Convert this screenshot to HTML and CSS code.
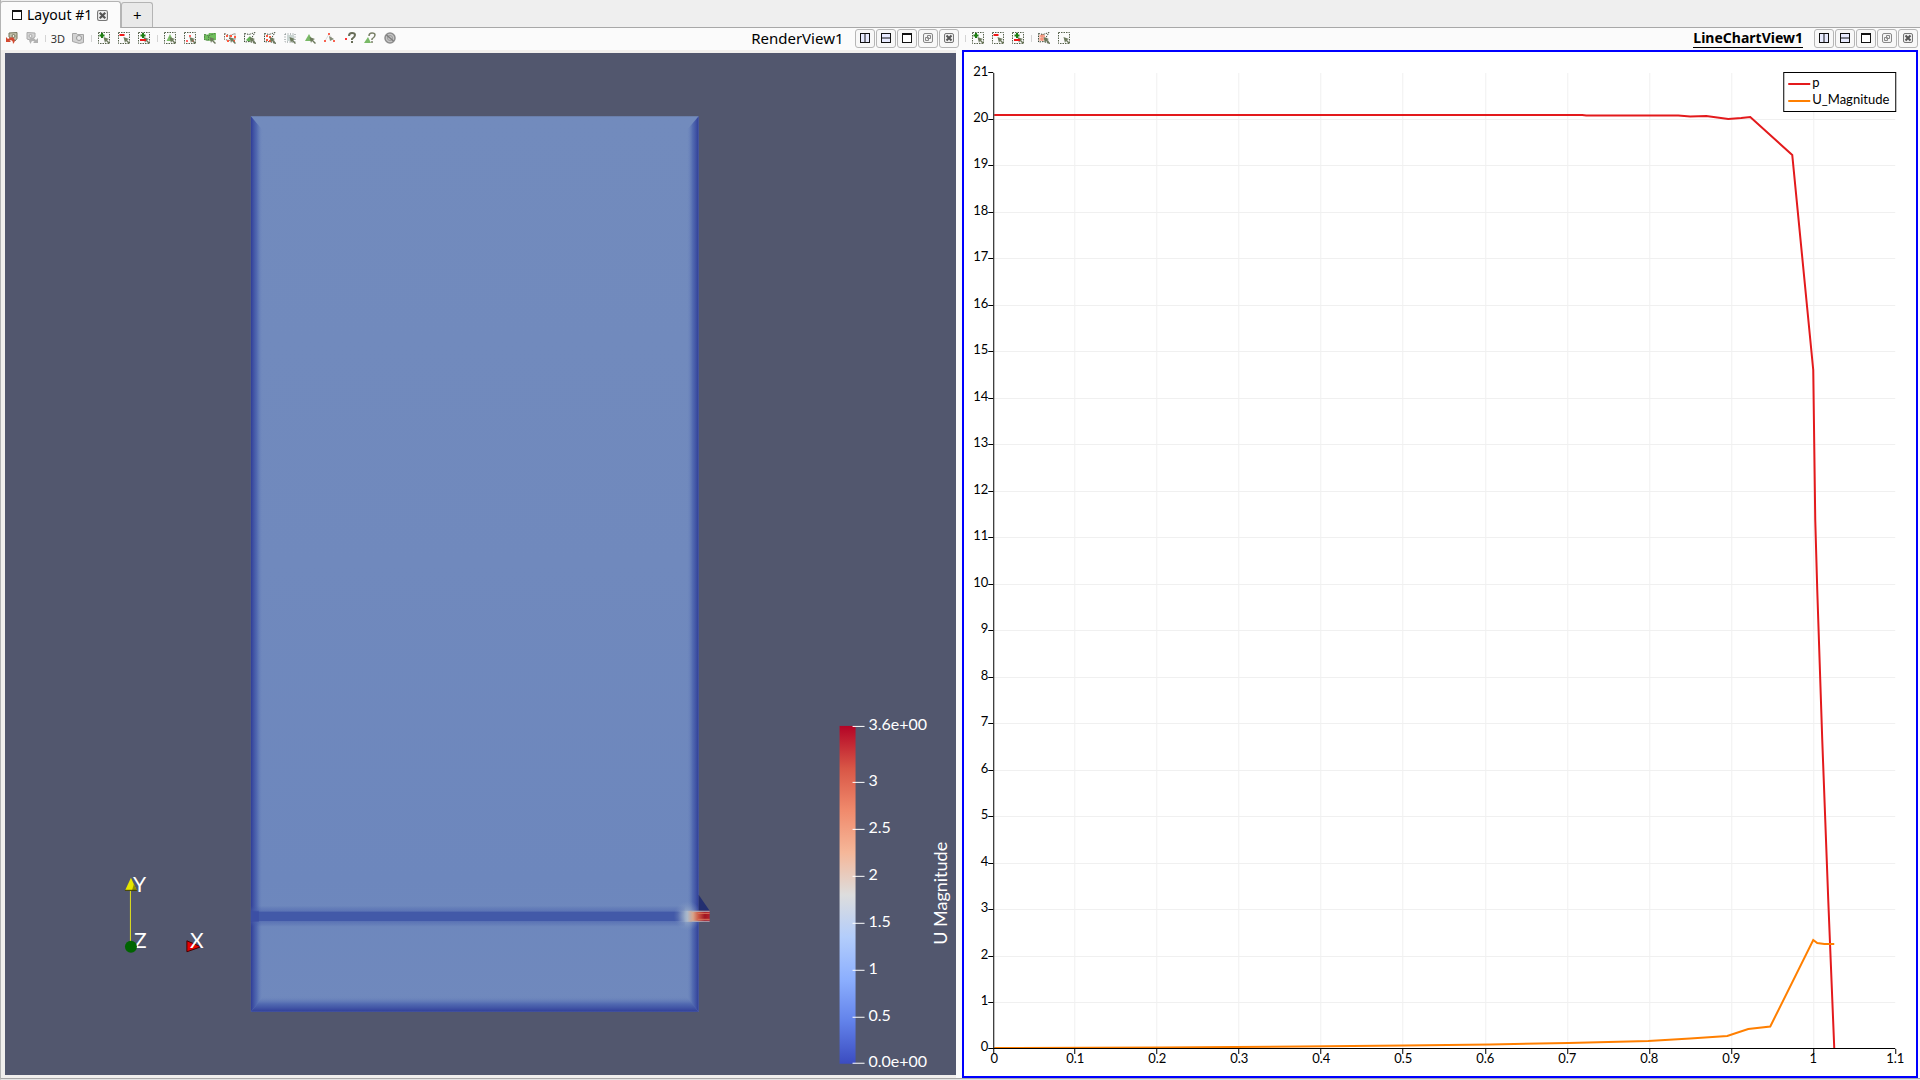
FILE: index.html
```html
<!DOCTYPE html>
<html lang="en">
<head>
<meta charset="utf-8">
<title>Layout #1</title>
<link rel="stylesheet" href="styles.css">
</head>
<body>
<svg class="defs" aria-hidden="true">
  <symbol id="box" viewBox="0 0 12 12"><rect x=".5" y=".5" width="11" height="11" fill="none" stroke="#55604a" stroke-dasharray="1.5 1"/></symbol>
  <symbol id="cursor" viewBox="0 0 12 12"><path d="M5.500 5l5.500 2-2 1 3 3-1 1-3-3-1 2z" fill="#6d7a5c"/></symbol>
  <symbol id="poly" viewBox="0 0 12 12"><path d="M.5 1.500l4.500 1 6-2-3 5 3.500 6-5.500-2-5.500.5z" fill="none" stroke="#3f4a38" stroke-dasharray="1.5 1"/></symbol>
  <symbol id="i-add" viewBox="0 0 12 12"><use href="#box"/><use href="#cursor"/><path d="M4 1v5M1.500 3.500h5" stroke="#1d7d12" stroke-width="2"/></symbol>
  <symbol id="i-sub" viewBox="0 0 12 12"><use href="#box"/><use href="#cursor"/><path d="M1.500 3h5" stroke="#f01818" stroke-width="2"/></symbol>
  <symbol id="i-toggle" viewBox="0 0 12 12"><use href="#box"/><use href="#cursor"/><path d="M5 1v5M2.500 3.500h5" stroke="#1d7d12" stroke-width="2"/><path d="M2 8h6" stroke="#f01818" stroke-width="2"/></symbol>
  <symbol id="i-cells" viewBox="0 0 12 12"><use href="#box"/><path d="M6 2l3.500 7h-7z" fill="#7cc068"/><use href="#cursor"/></symbol>
  <symbol id="i-points" viewBox="0 0 12 12"><use href="#box"/><path d="M5 3h2v2H5zM2 8h2v2H2zM8 8h2v2H8z" fill="#f66"/><use href="#cursor"/></symbol>
  <symbol id="i-frcells" viewBox="0 0 12 12"><path d="M0 2l4 1 1-2h7v7l-5 1-7-1z" fill="#6fbe5c"/><path d="M.5 2.500l4 1v5l-4-1zM5 3.500l6-2" fill="none" stroke="#4e7a45" stroke-dasharray="1.5 1"/><use href="#cursor"/></symbol>
  <symbol id="i-frpoints" viewBox="0 0 12 12"><path d="M.5 1.500l5 2v5l-5-1zM6 3.500l5-2v7" fill="none" stroke="#7a6a5c" stroke-dasharray="1.5 1"/><path d="M2 3h2v2H2zM6 3h2v2H6zM10 4h2v2h-2zM3 8h2v2H3zM9 8h2v2H9z" fill="#ff5a40"/><use href="#cursor"/></symbol>
  <symbol id="i-pgcells" viewBox="0 0 12 12"><path d="M2 8l4-4 2 3-3 3z" fill="#62b653"/><use href="#poly"/><use href="#cursor"/></symbol>
  <symbol id="i-pgpoints" viewBox="0 0 12 12"><use href="#poly"/><path d="M2 3h2v2H2zM5 4h2v2H5zM2 7h2v2H2zM5 8h2v2H5z" fill="#ff5a40"/><use href="#cursor"/></symbol>
  <symbol id="i-block" viewBox="0 0 12 12"><path d="M3 3h7v6H3z" fill="#cbd6d3"/><rect x="1" y="2" width="10" height="8" fill="none" stroke="#7b8585" stroke-dasharray="1 1.500"/><use href="#cursor"/></symbol>
  <symbol id="i-hcell" viewBox="0 0 12 12"><path d="M5 2l4 7H1z" fill="#79b966"/><use href="#cursor"/></symbol>
  <symbol id="i-hpoint" viewBox="0 0 12 12"><path d="M1 9l4-7 5 7" fill="none" stroke="#ddd"/><path d="M4 1h2v2H4zM0 8h2v2H0zM9 8h2v2H9z" fill="#f76250"/><path d="M5 4l5 3-2 1-2 1z" fill="#858c78"/></symbol>
  <symbol id="i-qpoint" viewBox="0 0 12 12"><path d="M1 6h2v2H1z" fill="#f33"/><path d="M5 4q0-3 3-3t3 2q0 2-3 4v1M8 9v2" fill="none" stroke="#686d58" stroke-width="2"/></symbol>
  <symbol id="i-qcell" viewBox="0 0 12 12"><path d="M4 5l3 6H0z" fill="#79b966"/><path d="M5 4q0-3 3-3t3 2q0 2-3 4v1M8 9v2" fill="none" stroke="#7a8068" stroke-width="1.5"/></symbol>
  <symbol id="i-clear" viewBox="0 0 12 12"><circle cx="6" cy="6" r="5" fill="#c4c4c4" stroke="#8c8c8c" stroke-width="1.5"/><circle cx="6" cy="6" r="2.500" fill="none" stroke="#999"/><path d="M2.500 3l7 6" stroke="#7e7e7e" stroke-width="1.5"/></symbol>
  <symbol id="i-undo" viewBox="0 0 12 12"><path d="M3 1l8-.5v6L9 9 3 5z" fill="#c2c0aa" stroke="#77775f"/><circle cx="7.500" cy="4" r="1.500" fill="#edece0" stroke="#77775f"/><path d="M0 5v5h5L3.500 8.500Q7 7 7 12q3-3 1-5.500T2 7z" fill="#d34a32"/></symbol>
  <symbol id="i-redo" viewBox="0 0 12 12"><path d="M1 .5L9 1v4L4 8 1 7z" fill="#d4d4d4" stroke="#aaa"/><circle cx="4.500" cy="4" r="1.500" fill="#eee" stroke="#aaa"/><path d="M12 6v5H7l1.500-1.500Q5 8 5 12 2 9 4 6.500T10 8z" fill="#b2b2b2"/></symbol>
  <symbol id="i-camera" viewBox="0 0 12 12"><path d="M.5 1.500h4l1 1h6v8l-4 1-7-2z" fill="#d2d2d2" stroke="#a5a5a5"/><circle cx="7" cy="6" r="2.500" fill="#e9e9e9" stroke="#999"/></symbol>
  <symbol id="i-chpoly" viewBox="0 0 12 12"><path d="M1 3l5-1 2 5-2 2H1z" fill="#f8c5b6"/><path d="M2 4h5M2 7h5M4 2v7" stroke="#f3846a"/><use href="#poly"/><use href="#cursor"/></symbol>
  <symbol id="i-chbox" viewBox="0 0 12 12"><use href="#box"/><use href="#cursor"/></symbol>
  <symbol id="w-h" viewBox="0 0 10 10"><rect x=".5" y=".5" width="9" height="9" fill="#e8ebff" stroke="#111"/><path d="M5 1v8" stroke="#111"/></symbol>
  <symbol id="w-v" viewBox="0 0 10 10"><rect x=".5" y=".5" width="9" height="9" fill="#e8ebff" stroke="#111"/><path d="M1 5h8" stroke="#111"/></symbol>
  <symbol id="w-max" viewBox="0 0 10 10"><rect x=".5" y=".5" width="9" height="9" fill="#fff" stroke="#111"/><path d="M0 1h10" stroke="#111" stroke-width="2"/></symbol>
  <symbol id="w-pop" viewBox="0 0 10 10"><rect x=".5" y=".5" width="9" height="9" rx="1.500" fill="#f4f4f4" stroke="#888"/><path d="M4.500 2.500h3v3h-3zM2.500 4.500h3v3h-3z" fill="#eee" stroke="#888"/></symbol>
  <symbol id="w-close" viewBox="0 0 10 10"><rect x=".5" y=".5" width="9" height="9" rx="1.500" fill="#eee" stroke="#777"/><path d="M2.500 2.500l5 5M7.500 2.500l-5 5" stroke="#555" stroke-width="2"/></symbol>
</svg>

<div class="window">
  <nav class="tabs">
    <div class="tab tab-active">
      <svg class="tab-icon"><use href="#w-max"/></svg>
      <span>Layout #1</span>
      <button class="tab-close" aria-label="Close layout"><svg><use href="#w-close"/></svg></button>
    </div>
    <button class="tab tab-new" aria-label="New layout">+</button>
  </nav>

  <main class="views">
    <section class="view">
      <header class="toolbar toolbar-render">
        <button class="tool" aria-label="Camera undo"><svg><use href="#i-undo"/></svg></button>
        <button class="tool" aria-label="Camera redo"><svg><use href="#i-redo"/></svg></button>
        <i class="sep"></i>
        <button class="tool tool-text">3D</button>
        <button class="tool" aria-label="Adjust camera"><svg><use href="#i-camera"/></svg></button>
        <i class="sep"></i>
        <button class="tool" aria-label="Add selection"><svg><use href="#i-add"/></svg></button>
        <button class="tool" aria-label="Subtract selection"><svg><use href="#i-sub"/></svg></button>
        <button class="tool" aria-label="Toggle selection"><svg><use href="#i-toggle"/></svg></button>
        <i class="sep"></i>
        <button class="tool" aria-label="Select cells on"><svg><use href="#i-cells"/></svg></button>
        <button class="tool" aria-label="Select points on"><svg><use href="#i-points"/></svg></button>
        <button class="tool" aria-label="Select cells through"><svg><use href="#i-frcells"/></svg></button>
        <button class="tool" aria-label="Select points through"><svg><use href="#i-frpoints"/></svg></button>
        <button class="tool" aria-label="Select cells with polygon"><svg><use href="#i-pgcells"/></svg></button>
        <button class="tool" aria-label="Select points with polygon"><svg><use href="#i-pgpoints"/></svg></button>
        <button class="tool" aria-label="Select block"><svg><use href="#i-block"/></svg></button>
        <button class="tool" aria-label="Interactive select cells"><svg><use href="#i-hcell"/></svg></button>
        <button class="tool" aria-label="Interactive select points"><svg><use href="#i-hpoint"/></svg></button>
        <button class="tool" aria-label="Hover points"><svg><use href="#i-qpoint"/></svg></button>
        <button class="tool" aria-label="Hover cells"><svg><use href="#i-qcell"/></svg></button>
        <button class="tool" aria-label="Clear selection"><svg><use href="#i-clear"/></svg></button>
        <h2 class="view-title">RenderView1</h2>
        <div class="frame-buttons">
          <button aria-label="Split horizontal"><svg><use href="#w-h"/></svg></button>
          <button aria-label="Split vertical"><svg><use href="#w-v"/></svg></button>
          <button aria-label="Maximize"><svg><use href="#w-max"/></svg></button>
          <button aria-label="Pop out"><svg><use href="#w-pop"/></svg></button>
          <button aria-label="Close"><svg><use href="#w-close"/></svg></button>
        </div>
      </header>
      <div class="canvas render">
        <svg viewBox="5 53 951 1022" role="img" aria-label="U Magnitude field">
          <defs>
            <linearGradient id="edgeL"><stop offset="0" stop-color="#2f3d98"/><stop offset=".5" stop-color="#4a62ae" stop-opacity=".8"/><stop offset="1" stop-color="#7089bd" stop-opacity="0"/></linearGradient>
            <linearGradient id="edgeR" x1="1" x2="0"><stop offset="0" stop-color="#2f3d98"/><stop offset=".5" stop-color="#4a62ae" stop-opacity=".8"/><stop offset="1" stop-color="#7089bd" stop-opacity="0"/></linearGradient>
            <linearGradient id="edgeB" x1="0" x2="0" y1="1" y2="0"><stop offset="0" stop-color="#2f3d98"/><stop offset=".5" stop-color="#4a62ae" stop-opacity=".8"/><stop offset="1" stop-color="#7089bd" stop-opacity="0"/></linearGradient>
            <linearGradient id="body" x1="0" x2="0" y1="0" y2="1"><stop offset="0" stop-color="#728bbd"/><stop offset=".5" stop-color="#7089bd"/><stop offset=".85" stop-color="#6d87bd"/><stop offset="1" stop-color="#7089bd"/></linearGradient>
            <linearGradient id="slot" x1="0" x2="0" y1="0" y2="1"><stop offset="0" stop-color="#4259a8" stop-opacity="0"/><stop offset=".25" stop-color="#4a61ad" stop-opacity=".5"/><stop offset=".3" stop-color="#4259a8"/><stop offset=".7" stop-color="#4259a8"/><stop offset=".75" stop-color="#4a61ad" stop-opacity=".5"/><stop offset="1" stop-color="#4259a8" stop-opacity="0"/></linearGradient>
            <linearGradient id="jet"><stop offset="0" stop-color="#7089bd" stop-opacity="0"/><stop offset=".3" stop-color="#aab9cc"/><stop offset=".48" stop-color="#d9a58a"/><stop offset=".65" stop-color="#cc5743"/><stop offset=".85" stop-color="#a01622"/><stop offset="1" stop-color="#b3202a"/></linearGradient>
            <radialGradient id="halo"><stop offset="0" stop-color="#b5c2cf" stop-opacity=".9"/><stop offset="1" stop-color="#7f97c0" stop-opacity="0"/></radialGradient>
            <linearGradient id="legend" x1="0" x2="0" y1="0" y2="1"><stop offset="0" stop-color="#b40426"/><stop offset=".125" stop-color="#d85646"/><stop offset=".25" stop-color="#f08a6c"/><stop offset=".375" stop-color="#f5b799"/><stop offset=".5" stop-color="#dddddd"/><stop offset=".625" stop-color="#b3cdfb"/><stop offset=".75" stop-color="#8caffe"/><stop offset=".875" stop-color="#6282ea"/><stop offset="1" stop-color="#3b4cc0"/></linearGradient>
          </defs>
          <rect x="251" y="116" width="448" height="896" fill="url(#body)"/>
          <path d="M251 116l12 14v868l-12 14z" fill="url(#edgeL)"/>
          <path d="M699 116l-12 14v868l12 14z" fill="url(#edgeR)"/>
          <path d="M251 1012l13-16h422l13 16z" fill="url(#edgeB)"/>
          <rect x="251" y="906" width="434" height="21" fill="url(#slot)"/>
          <rect x="251" y="911" width="8" height="11" fill="#3546a0" opacity=".5"/>
          <ellipse cx="688" cy="916" rx="14" ry="15" fill="url(#halo)"/>
          <path d="M699 895l11 16h-11z" fill="#232f70"/>
          <rect x="678" y="911" width="32" height="11" fill="url(#jet)"/>
          <path d="M692 911.500h18M692 921.500h18" stroke="#a9afc0"/>
          <path d="M698 913.500h12M698 919.500h12" stroke="#d9785c"/>

          <rect x="840" y="726" width="16" height="338" fill="url(#legend)"/>
          <path d="M853 726.500h12M853 782.500h12M853 829.500h12M853 876.500h12M853 923.500h12M853 970.500h12M853 1017.500h12M853 1063.500h12" stroke="#fff"/>
          <g class="scale-label">
            <text x="869" y="730">3.6e+00</text><text x="869" y="786">3</text><text x="869" y="833">2.5</text><text x="869" y="880">2</text><text x="869" y="927">1.5</text><text x="869" y="974">1</text><text x="869" y="1021">0.5</text><text x="869" y="1067">0.0e+00</text>
          </g>
          <text class="scale-title" transform="translate(947 945) rotate(-90)">U Magnitude</text>

          <path d="M130.500 890v52" stroke="#e2e21a"/>
          <path d="M131 878l6 13h-12z" fill="#e6e600"/><path d="M134 884l3 7h-5z" fill="#8f8f00"/><path d="M125 890.500h12" stroke="#333300"/>
          <path d="M187 941l14 6-14 5z" fill="#e60000" stroke="#400"/>
          <g class="axis-letter"><text x="133" y="892">Y</text><text x="134" y="948">Z</text><text x="190" y="948">X</text></g>
          <circle cx="131" cy="947" r="6" fill="#006400"/>
        </svg>
      </div>
    </section>

    <section class="view">
      <header class="toolbar toolbar-chart">
        <i class="sep"></i>
        <button class="tool" aria-label="Add selection"><svg><use href="#i-add"/></svg></button>
        <button class="tool" aria-label="Subtract selection"><svg><use href="#i-sub"/></svg></button>
        <button class="tool" aria-label="Toggle selection"><svg><use href="#i-toggle"/></svg></button>
        <i class="sep"></i>
        <button class="tool" aria-label="Polygon selection"><svg><use href="#i-chpoly"/></svg></button>
        <button class="tool" aria-label="Rectangle selection"><svg><use href="#i-chbox"/></svg></button>
        <h2 class="view-title view-title-active"><span>LineChartView1</span></h2>
        <div class="frame-buttons">
          <button aria-label="Split horizontal"><svg><use href="#w-h"/></svg></button>
          <button aria-label="Split vertical"><svg><use href="#w-v"/></svg></button>
          <button aria-label="Maximize"><svg><use href="#w-max"/></svg></button>
          <button aria-label="Pop out"><svg><use href="#w-pop"/></svg></button>
          <button aria-label="Close"><svg><use href="#w-close"/></svg></button>
        </div>
      </header>
      <div class="canvas chart">
        <svg viewBox="964 52 952 1024" role="img" aria-label="Line chart of p and U_Magnitude">
          <path class="grid" d="M994 1002.500h901M994 956.500h901M994 909.500h901M994 863.500h901M994 816.500h901M994 770.500h901M994 723.500h901M994 677.500h901M994 630.500h901M994 584.500h901M994 537.500h901M994 491.500h901M994 444.500h901M994 398.500h901M994 351.500h901M994 305.500h901M994 258.500h901M994 212.500h901M994 165.500h901M994 119.500h901M1074.500 73v975M1156.500 73v975M1238.500 73v975M1320.500 73v975M1402.500 73v975M1485.500 73v975M1567.500 73v975M1649.500 73v975M1731.500 73v975M1813.500 73v975"/>
          <path class="line-p" d="M994 115H1582L1586 115.500H1678L1690 116.500L1706 116L1728 119L1741 118L1750 117L1792 155L1813 370L1815 520L1817 590L1822 740L1828 900L1834 1048"/>
          <path class="line-u" d="M994 1048L1162 1047.500L1300 1046.500L1404 1045.500L1490 1044.500L1568 1043L1648 1041L1690 1038.500L1727 1036L1748 1029L1770 1026.500L1813 940L1817 943L1824 944H1834"/>
          <path class="axis" d="M993.500 73v976M993 1048.500h902M988 1048.500h5M988 1002.500h5M988 956.500h5M988 909.500h5M988 863.500h5M988 816.500h5M988 770.500h5M988 723.500h5M988 677.500h5M988 630.500h5M988 584.500h5M988 537.500h5M988 491.500h5M988 444.500h5M988 398.500h5M988 351.500h5M988 305.500h5M988 258.500h5M988 212.500h5M988 165.500h5M988 119.500h5M988 72.500h5M993.500 1049v5M1074.500 1049v5M1156.500 1049v5M1238.500 1049v5M1320.500 1049v5M1402.500 1049v5M1485.500 1049v5M1567.500 1049v5M1649.500 1049v5M1731.500 1049v5M1813.500 1049v5M1895.500 1049v5"/>
          <g class="tick-y">
            <text x="988" y="1051">0</text><text x="988" y="1005">1</text><text x="988" y="959">2</text><text x="988" y="912">3</text><text x="988" y="866">4</text><text x="988" y="819">5</text><text x="988" y="773">6</text><text x="988" y="726">7</text><text x="988" y="680">8</text><text x="988" y="633">9</text><text x="988" y="587">10</text><text x="988" y="540">11</text><text x="988" y="494">12</text><text x="988" y="447">13</text><text x="988" y="401">14</text><text x="988" y="354">15</text><text x="988" y="308">16</text><text x="988" y="261">17</text><text x="988" y="215">18</text><text x="988" y="168">19</text><text x="988" y="122">20</text><text x="988" y="76">21</text>
          </g>
          <g class="tick-x">
            <text x="994" y="1063">0</text><text x="1075" y="1063">0.1</text><text x="1157" y="1063">0.2</text><text x="1239" y="1063">0.3</text><text x="1321" y="1063">0.4</text><text x="1403" y="1063">0.5</text><text x="1485" y="1063">0.6</text><text x="1567" y="1063">0.7</text><text x="1649" y="1063">0.8</text><text x="1731" y="1063">0.9</text><text x="1813" y="1063">1</text><text x="1895" y="1063">1.1</text>
          </g>
          <rect x="1783.500" y="72.500" width="112" height="39" fill="#fff" stroke="#000"/>
          <path class="line-p" d="M1788 84h22"/>
          <path class="line-u" d="M1788 101h22"/>
          <g class="legend-label"><text x="1812" y="87">p</text><text x="1812" y="104">U_Magnitude</text></g>
        </svg>
      </div>
    </section>
  </main>
</div>
</body>
</html>
```
FILE: styles.css
```css
* { box-sizing: border-box; }

body {
  margin: 0;
  background: #efefef;
  color: #000;
  font-family: "Noto Sans", "Open Sans", sans-serif;
}

button {
  margin: 0;
  padding: 0;
  border: 0;
  background: none;
  color: inherit;
  font: inherit;
}

.defs { position: absolute; width: 0; height: 0; }

.window {
  display: flex;
  flex-direction: column;
  height: 100vh;
  border-left: 1px solid #b4b4b4;
  border-bottom: 1px solid #e4e4e4;
}

/* Layout tabs */
.tabs {
  display: flex;
  align-items: flex-end;
  flex: none;
  height: 28px;
  border-bottom: 1px solid #a8a8a8;
}

.tab {
  display: flex;
  align-items: center;
  border: 1px solid #b4b4b4;
  border-bottom: 0;
  border-radius: 3px 3px 0 0;
  font-size: 14px;
  line-height: 20px;
}

.tab-active {
  height: 27px;
  margin: 0 0 -1px -1px;
  padding: 0 12px 0 11px;
  gap: 5px;
  background: #fbfbfb;
}

.tab-icon { width: 10px; height: 10px; }
.tab-close { width: 11px; height: 11px; }
.tab-close svg { display: block; width: 11px; height: 11px; }

.tab-new {
  justify-content: center;
  width: 32px;
  height: 25px;
  background: #e9e9e9;
  font-size: 15px;
}

/* View frames */
.views {
  display: grid;
  grid-template-columns: 1fr 1fr;
  flex: 1;
  min-height: 0;
  border-bottom: 1px solid #a8a8a8;
}

.view {
  display: flex;
  flex-direction: column;
  min-width: 0;
  min-height: 0;
  background: #fbfbfb;
}

.toolbar {
  display: flex;
  align-items: center;
  flex: none;
  height: 22px;
  padding: 0 2px 2px 1px;
}

.tool {
  display: flex;
  align-items: center;
  justify-content: center;
  flex: none;
  width: 20px;
  height: 20px;
}

.tool svg { width: 12px; height: 12px; }
.tool-text { color: #333; font-size: 11px; }

.sep {
  flex: none;
  width: 1px;
  height: 7px;
  margin: 0 2px 0 3px;
  background: #d4d4d4;
}

.view-title {
  flex: 1;
  margin: 0;
  padding-right: 11px;
  font-size: 15px;
  font-weight: 400;
  line-height: 18px;
  text-align: right;
  white-space: nowrap;
}

.view-title-active { font-size: 14px; font-weight: 700; }
.view-title-active span { display: inline-block; border-bottom: 1px solid #000; }

.frame-buttons { display: flex; gap: 1px; }

.frame-buttons button {
  display: flex;
  align-items: center;
  justify-content: center;
  width: 20px;
  height: 19px;
  border: 1px solid #b6b6b6;
  border-radius: 3px;
  background: #f8f8f8;
}

.frame-buttons svg { width: 10px; height: 10px; }

.canvas { flex: 1; min-height: 0; }
.canvas svg { display: block; width: 100%; height: 100%; }

.render {
  margin: 0 5px 0 0;
  border: solid #f1efed;
  border-width: 3px 0 3px 4px;
  background: #52576e;
}

.chart {
  margin: 0 2px 0 1px;
  border: 2px solid #0000ff;
  background: #fff;
}

/* Scene and chart drawing */
.canvas text { font-family: Lato, sans-serif; }
.scale-label { fill: #fff; font-size: 16px; }
.scale-title { fill: #fff; font-size: 18px; }
.axis-letter { fill: #fff; font-size: 21px; }

.grid { fill: none; stroke: #f0f0f0; }
.axis { fill: none; stroke: #000; }
.line-p { fill: none; stroke: #e31a1c; stroke-width: 2; }
.line-u { fill: none; stroke: #ff7f00; stroke-width: 2; }
.tick-x, .tick-y, .legend-label { font-size: 13px; }
.tick-x { text-anchor: middle; }
.tick-y { text-anchor: end; }
```
